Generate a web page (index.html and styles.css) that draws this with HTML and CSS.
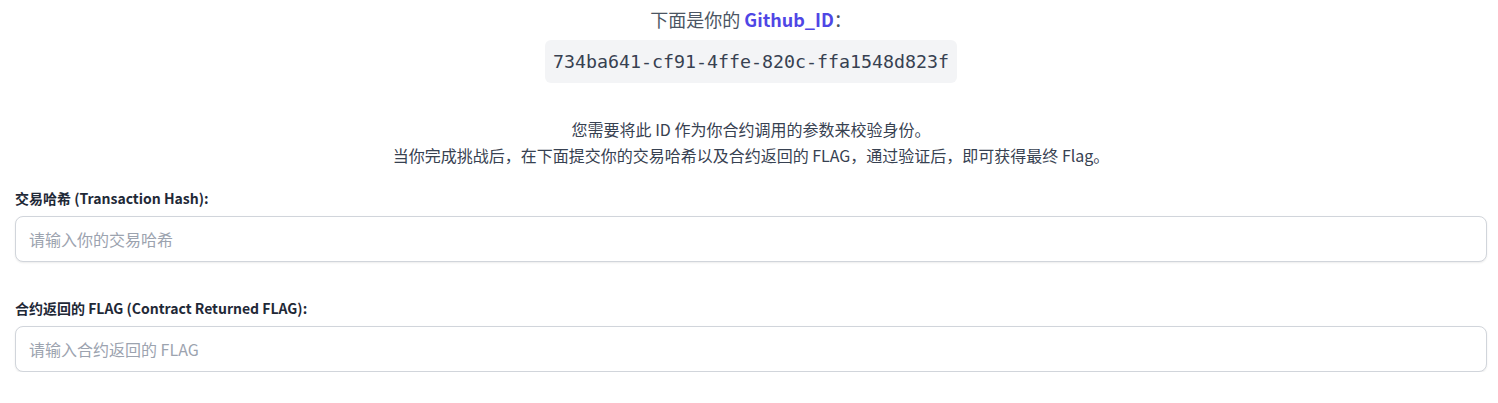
FILE: index.html
```html
<!DOCTYPE html>
<html lang="zh-CN">
<head>
<meta charset="utf-8">
<title>Github ID</title>
<link rel="stylesheet" href="styles.css">
</head>
<body>
<main class="page">
  <section class="id-block">
    <p class="id-title">下面是你的 <strong class="id-name">Github_ID</strong>：</p>
    <code class="id-code">734ba641-cf91-4ffe-820c-ffa1548d823f</code>
  </section>
  <p class="desc">您需要将此 ID 作为你合约调用的参数来校验身份。<br>当你完成挑战后，在下面提交你的交易哈希以及合约返回的 FLAG，通过验证后，即可获得最终 Flag。</p>
  <form class="form">
    <div class="field">
      <label class="label" for="tx">交易哈希 (Transaction Hash):</label>
      <input class="input" id="tx" type="text" placeholder="请输入你的交易哈希">
    </div>
    <div class="field">
      <label class="label" for="flag">合约返回的 FLAG (Contract Returned FLAG):</label>
      <input class="input" id="flag" type="text" placeholder="请输入合约返回的 FLAG">
    </div>
  </form>
</main>
</body>
</html>
```

FILE: styles.css
```css
* { box-sizing: border-box; }
html, body { margin: 0; padding: 0; background: #ffffff; }
body {
  font-family: "Noto Sans CJK SC", "Noto Sans", sans-serif;
  color: #374151;
}
.page {
  padding: 5px 11px 0 15px;
  display: flex;
  flex-direction: column;
}
.id-block {
  display: flex;
  flex-direction: column;
  align-items: center;
}
.id-title {
  margin: 0;
  font-size: 18px;
  line-height: 28px;
  color: #4b5563;
}
.id-name {
  color: #4f46e5;
  font-weight: 700;
}
.id-code {
  margin-top: 7px;
  display: block;
  background: #f3f4f6;
  border-radius: 6px;
  padding: 8px 8px;
  font-family: "DejaVu Sans Mono", "Liberation Mono", monospace;
  font-size: 18.3px;
  line-height: 27px;
  color: #374151;
}
.desc {
  margin: 33px 0 0;
  text-align: center;
  font-size: 16px;
  line-height: 26px;
  color: #374151;
}
.form {
  margin-top: 20px;
  display: flex;
  flex-direction: column;
  gap: 36px;
}
.field {
  display: flex;
  flex-direction: column;
  gap: 8px;
}
.label {
  font-size: 14px;
  line-height: 20px;
  font-weight: 700;
  color: #1f2937;
}
.input {
  width: 100%;
  height: 46px;
  padding: 12px 13px;
  border: 1px solid #d1d5db;
  border-radius: 8px;
  box-shadow: 0 1px 2px rgba(0,0,0,0.08);
  font-family: inherit;
  font-size: 16px;
  line-height: 20px;
  color: #111827;
  background: #fff;
  outline: none;
}
.input::placeholder { color: #9ca3af; }
```
